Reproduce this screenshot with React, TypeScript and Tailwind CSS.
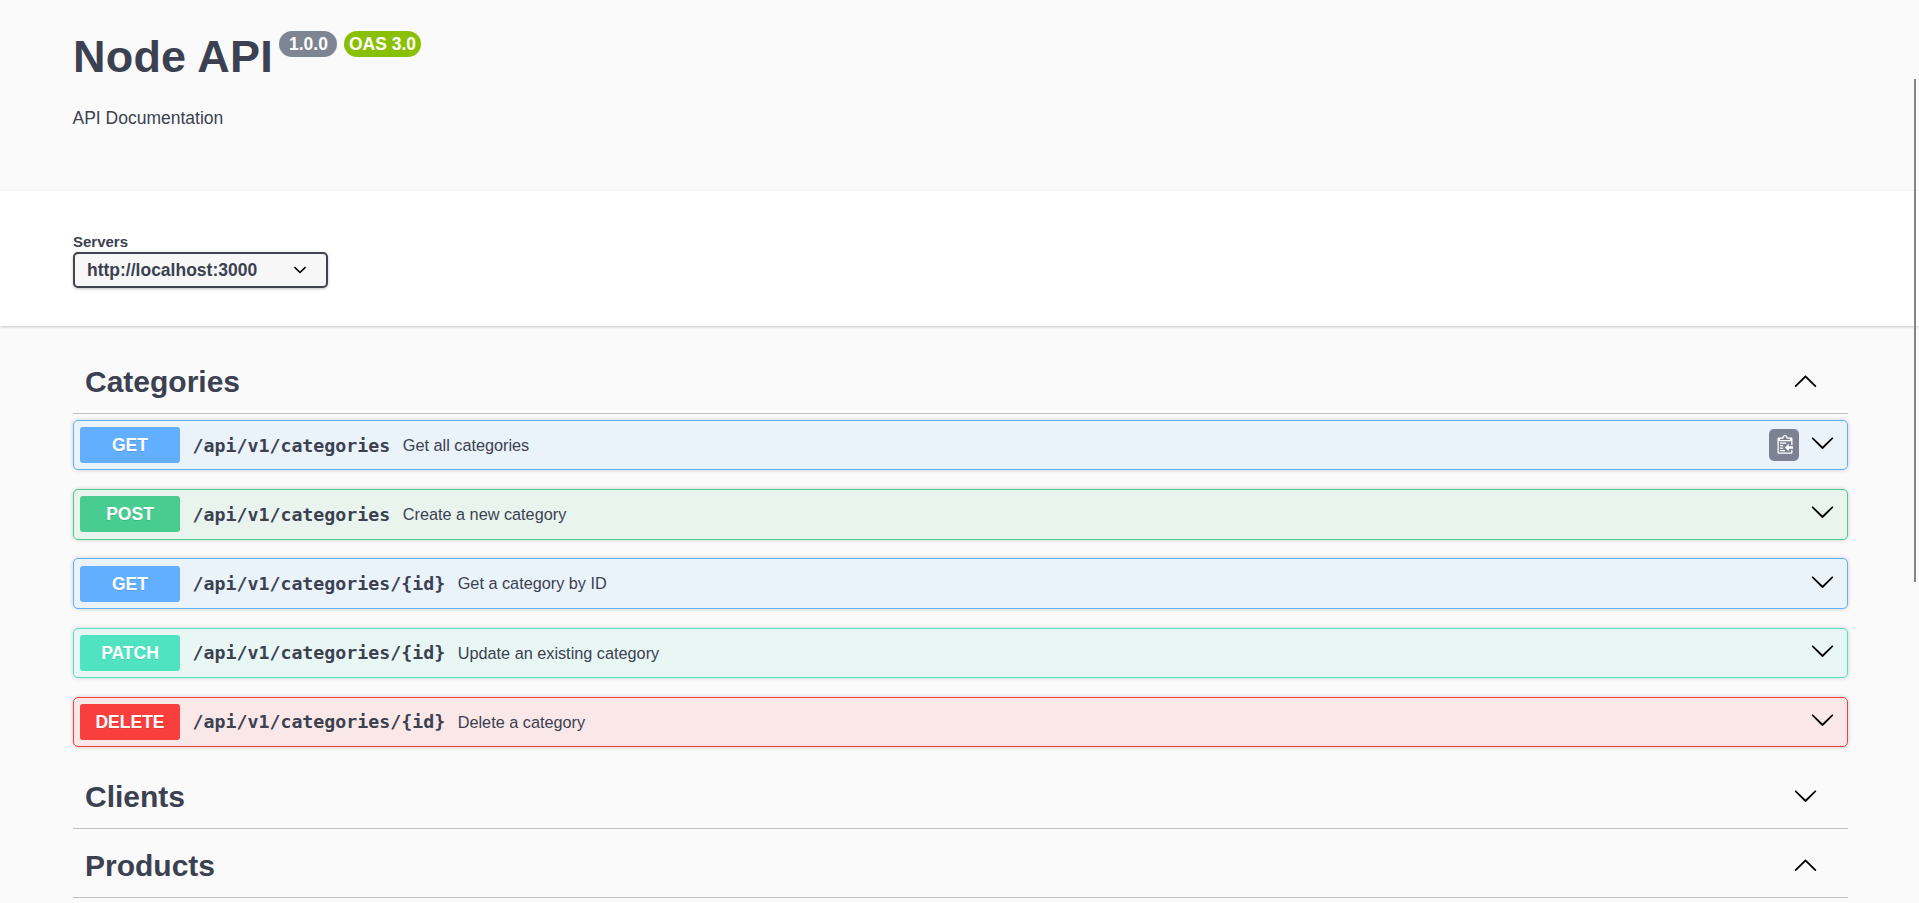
import { clsx } from "clsx";

type Method = "GET" | "POST" | "PATCH" | "DELETE";

interface Operation {
  method: Method;
  path: string;
  summary: string;
  copyable?: boolean;
}

const operations: Operation[] = [
  { method: "GET", path: "/api/v1/categories", summary: "Get all categories", copyable: true },
  { method: "POST", path: "/api/v1/categories", summary: "Create a new category" },
  { method: "GET", path: "/api/v1/categories/{id}", summary: "Get a category by ID" },
  { method: "PATCH", path: "/api/v1/categories/{id}", summary: "Update an existing category" },
  { method: "DELETE", path: "/api/v1/categories/{id}", summary: "Delete a category" },
];

// ── Icons ───────────────────────────────────────────────────────────────
function Arrow({ up, className }: { up?: boolean; className?: string }) {
  return (
    <svg className={clsx("h-[25px] w-[25px] shrink-0", className)} viewBox="0 0 20 20">
      {up ? (
        <path d="M 17.418 14.908 C 17.69 15.176 18.127 15.176 18.397 14.908 C 18.667 14.64 18.668 14.207 18.397 13.939 L 10.489 6.109 C 10.219 5.841 9.782 5.841 9.51 6.109 L 1.602 13.939 C 1.332 14.207 1.332 14.64 1.602 14.908 C 1.873 15.176 2.311 15.176 2.581 14.908 L 10 7.767 L 17.418 14.908 Z" />
      ) : (
        <path d="M17.418 6.109c.272-.268.709-.268.979 0s.271.701 0 .969l-7.908 7.83c-.27.268-.707.268-.979 0l-7.908-7.83c-.27-.268-.27-.701 0-.969.271-.268.709-.268.979 0L10 13.25l7.418-7.141z" />
      )}
    </svg>
  );
}

function CopyButton() {
  return (
    <button className="flex h-8 w-[30px] shrink-0 items-center justify-center rounded-[5px] bg-[#7d8293]">
      <svg className="h-[20px] w-[18.75px]" viewBox="0 0 15 16">
        <g transform="translate(2, -1)">
          <path
            fill="#fff"
            fillRule="evenodd"
            d="M2 13h4v1H2v-1zm5-6H2v1h5V7zm2 3V8l-3 3 3 3v-2h5v-2H9zM4.5 9H2v1h2.5V9zM2 12h2.5v-1H2v1zm9 1h1v2c-.02.28-.11.52-.3.7-.19.18-.42.28-.7.3H1c-.55 0-1-.45-1-1V4c0-.55.45-1 1-1h3c0-1.11.89-2 2-2 1.11 0 2 .89 2 2h3c.55 0 1 .45 1 1v5h-1V6H1v9h10v-2zM2 5h8c0-.55-.45-1-1-1H8c-.55 0-1-.45-1-1s-.45-1-1-1-1 .45-1 1-.45 1-1 1H3c-.55 0-1 .45-1 1z"
          />
        </g>
      </svg>
    </button>
  );
}

// ── Header ──────────────────────────────────────────────────────────────
function Info() {
  return (
    <header className="h-[191px] px-[73px] pt-[31px]">
      <div className="flex items-start">
        <h1 className="text-[45px] leading-[52px] font-bold tracking-[0.2px]">Node API</h1>
        <span className="ml-[6.5px] flex h-[26px] w-[58px] items-center justify-center rounded-full bg-[#7d8492] text-[17.5px] font-bold text-white">
          1.0.0
        </span>
        <span className="ml-[7px] flex h-[26px] w-[77px] items-center justify-center rounded-full bg-[#89bf04] pr-px text-[17.5px] font-bold whitespace-nowrap text-white">
          OAS 3.0
        </span>
      </div>
      <p className="mt-[25px] -ml-[0.5px] text-[17.5px] leading-5">API Documentation</p>
    </header>
  );
}

function Servers() {
  return (
    <section className="h-[135px] bg-white px-[73px] pt-[41px] shadow-[0_1px_2.5px_rgba(0,0,0,0.2)]">
      <div className="mb-px text-[15px] leading-[19px] font-bold">Servers</div>
      <button className="flex h-9 w-[255px] items-center justify-between rounded-[5px] border-2 border-[#41444e] bg-[#f7f7f7] pr-[17px] pl-3 text-[17.5px] font-bold shadow-[0_1px_3px_rgba(0,0,0,0.25)]">
        http://localhost:3000
        <svg className="h-[18px] w-[18px]" viewBox="0 0 18 18" fill="none" stroke="#000" strokeWidth="1.6">
          <path d="M3.5 6.200L9 11.500l5.500-5.300" />
        </svg>
      </button>
    </section>
  );
}

// ── Tags and operations ─────────────────────────────────────────────────
function TagHeader({ name, open, className }: { name: string; open?: boolean; className?: string }) {
  return (
    <div className={clsx("flex items-center justify-between border-b border-[#bfc0c4] pr-[30px] pl-3", className)}>
      <h2 className="text-[30px] leading-9 font-bold">{name}</h2>
      <Arrow up={open} className="mb-1" />
    </div>
  );
}

function OperationRow({ method, path, summary, copyable }: Operation) {
  return (
    <div
      className={clsx("flex h-[50.4px] items-center rounded-[5px] border pr-[12px] pl-[6px] shadow-[0_0_4px_rgba(0,0,0,0.19)]", {
        "border-[#61affe] bg-[#eaf2fa]": method === "GET",
        "border-[#49cc90] bg-[#e8f4ed]": method === "POST",
        "border-[#50e3c2] bg-[#e8f7f4]": method === "PATCH",
        "border-[#f93e3e] bg-[#fae7e7]": method === "DELETE",
      })}
    >
      <span
        className={clsx(
          "flex h-9 w-[100px] shrink-0 items-center justify-center rounded-[3px] text-[17.5px] font-bold text-white [text-shadow:0_1px_0_rgba(0,0,0,0.1)]",
          {
            "bg-[#61affe]": method === "GET",
            "bg-[#49cc90]": method === "POST",
            "bg-[#50e3c2]": method === "PATCH",
            "bg-[#f93e3e]": method === "DELETE",
          }
        )}
      >
        {method}
      </span>
      <span className="ml-[12.5px] font-['DejaVu_Sans_Mono',monospace] text-[18.26px] font-bold">{path}</span>
      <span className="ml-[12.5px] text-[16.25px]">{summary}</span>
      <div className="ml-auto flex items-center gap-[11px]">
        {copyable && <CopyButton />}
        <Arrow className="mb-[5px]" />
      </div>
    </div>
  );
}

export default function App() {
  return (
    <div className="h-[903px] overflow-hidden bg-[#fafafa] font-['Liberation_Sans',Arial,sans-serif] text-[#3b4151]">
      <Info />
      <Servers />
      <main className="pr-[71px] pl-[73px] pt-[25px]">
        <TagHeader name="Categories" open className="h-[63px]" />
        <div className="mt-[6px] mb-[19px] flex flex-col gap-[18.85px]">
          {operations.map((op) => (
            <OperationRow key={op.method + op.path} {...op} />
          ))}
        </div>
        <TagHeader name="Clients" className="h-[63px]" />
        <TagHeader name="Products" open className="mt-[6px] h-[63px]" />
      </main>
      {/* page scrollbar thumb */}
      <div className="absolute top-[79px] left-[1914px] h-[503px] w-[2px] bg-[#858585]" />
    </div>
  );
}
